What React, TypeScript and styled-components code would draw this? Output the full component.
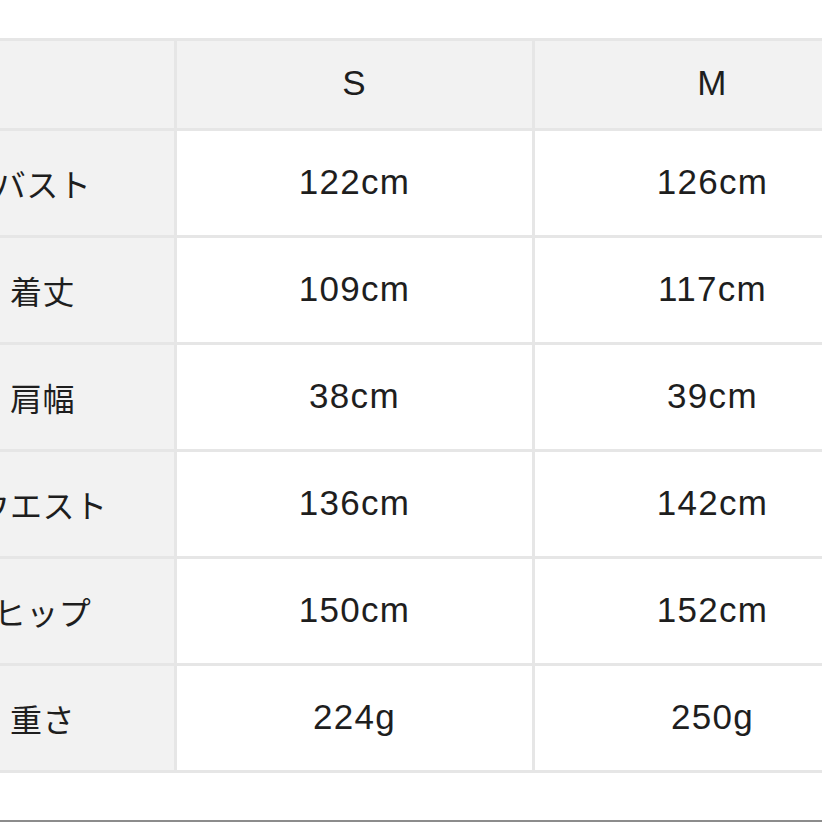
import React from "react";
import styled, { createGlobalStyle } from "styled-components";

const GlobalStyle = createGlobalStyle`
  html, body {
    margin: 0;
    padding: 0;
    background: #ffffff;
    overflow: hidden;
  }
  body {
    font-family: "Liberation Sans", "Noto Sans CJK JP", sans-serif;
    color: #1e1e1e;
  }
`;

const sizes = ["S", "M"];

const rows = [
  { label: "バスト", values: ["122cm", "126cm"] },
  { label: "着丈", values: ["109cm", "117cm"] },
  { label: "肩幅", values: ["38cm", "39cm"] },
  { label: "ウエスト", values: ["136cm", "142cm"] },
  { label: "ヒップ", values: ["150cm", "152cm"] },
  { label: "重さ", values: ["224g", "250g"] },
];

const Page = styled.div`
  width: 822px;
  height: 822px;
  overflow: hidden;
  padding-top: 38px;
  box-sizing: border-box;
`;

const SizeTable = styled.div`
  display: grid;
  grid-template-columns: 263px 355px 355px;
  grid-template-rows: 87px repeat(6, 104px);
  gap: 3px;
  padding: 3px 0 3px;
  margin-left: -89px;
  width: max-content;
  background: #e6e6e6;
`;

const Cell = styled.div<{ $head?: boolean; $jp?: boolean }>`
  display: flex;
  align-items: center;
  justify-content: center;
  padding-bottom: ${(p) => (p.$jp ? "0" : "3px")};
  background: ${(p) => (p.$head ? "#f2f2f2" : "#ffffff")};
  font-family: ${(p) =>
    p.$jp
      ? `"Noto Sans CJK JP", "Liberation Sans", sans-serif`
      : `"Liberation Sans", "Noto Sans CJK JP", sans-serif`};
  font-size: ${(p) => (p.$jp ? "32px" : "35px")};
  letter-spacing: ${(p) => (p.$jp ? "0.5px" : "1.3px")};
  color: #1e1e1e;
`;

const Divider = styled.div`
  margin-top: 47px;
  height: 2px;
  background: #8c8c8c;
`;

export default function App() {
  return (
    <>
      <GlobalStyle />
      <Page>
        <SizeTable>
          <Cell $head />
          {sizes.map((s) => (
            <Cell key={s} $head>
              {s}
            </Cell>
          ))}
          {rows.map((r) => (
            <React.Fragment key={r.label}>
              <Cell $head $jp>
                {r.label}
              </Cell>
              {r.values.map((v, i) => (
                <Cell key={i}>{v}</Cell>
              ))}
            </React.Fragment>
          ))}
        </SizeTable>
        <Divider />
      </Page>
    </>
  );
}
